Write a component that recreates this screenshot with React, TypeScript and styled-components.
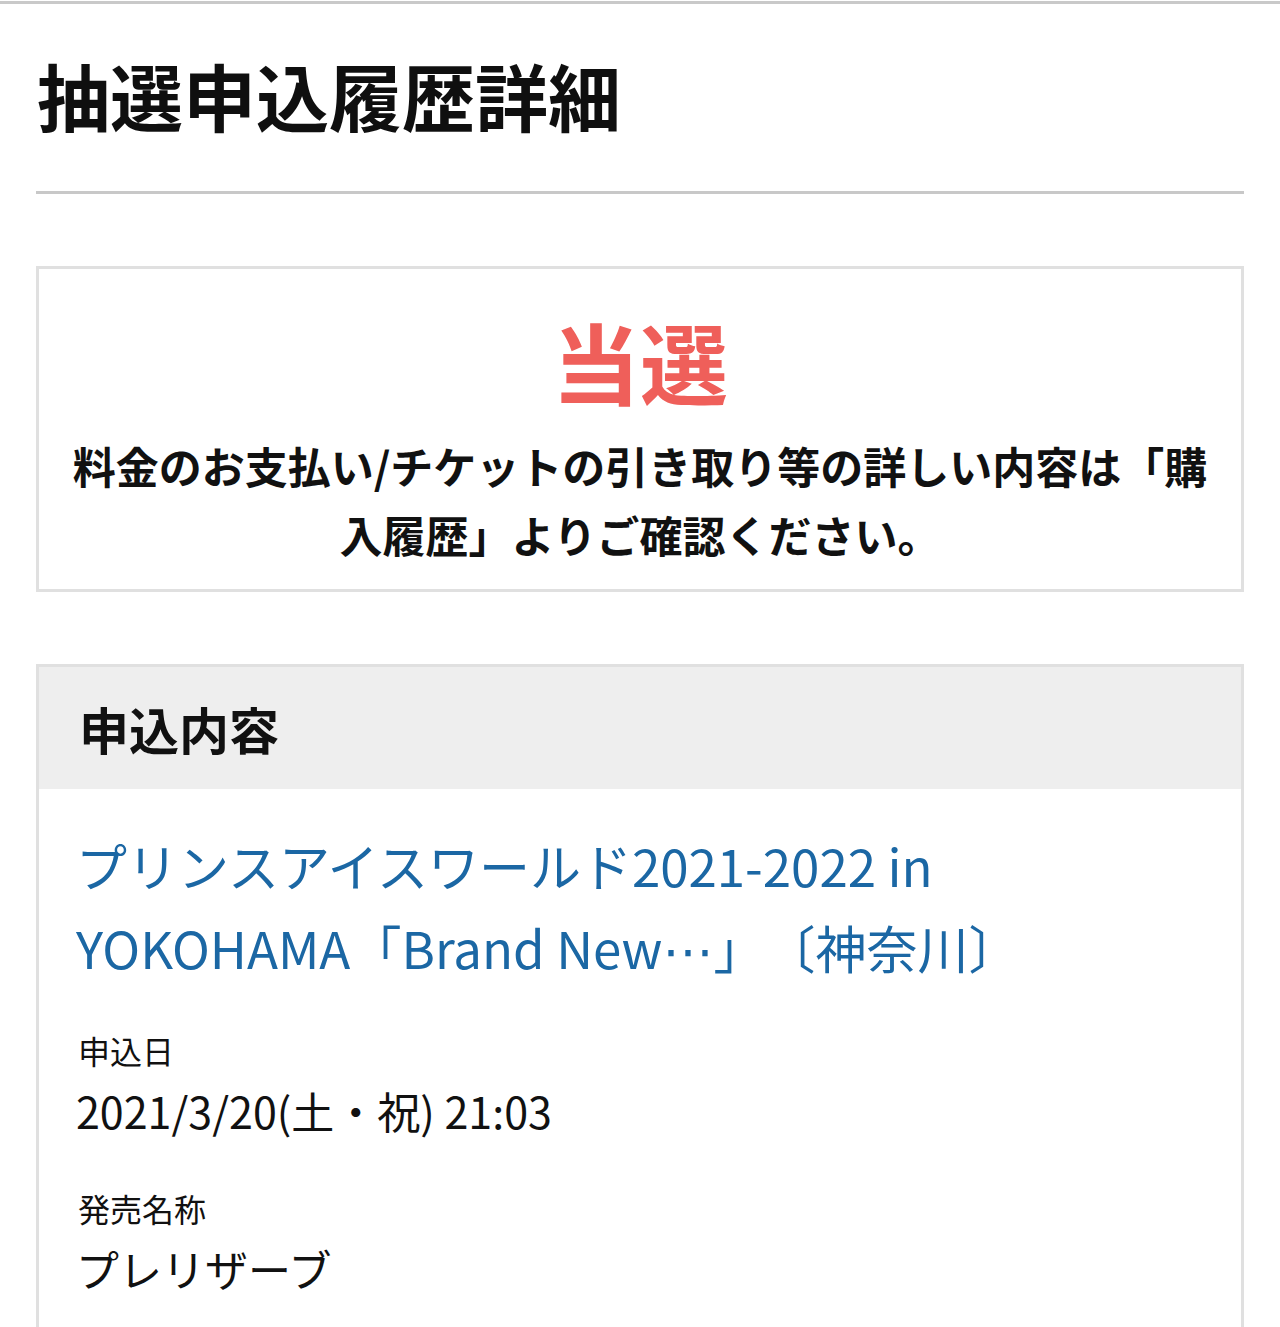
import React from "react";
import styled, { createGlobalStyle } from "styled-components";

const GlobalStyle = createGlobalStyle`
  html, body {
    margin: 0;
    padding: 0;
    background: #ffffff;
  }
  body {
    font-family: "Noto Sans CJK JP", "Noto Sans", sans-serif;
    color: #111111;
    text-spacing-trim: space-all;
  }
`;

const Page = styled.div`
  margin-top: 1px;
  border-top: 3px solid #c9c9c9;
  padding: 0 36px 0 36px;
  min-height: 1323px;
  box-sizing: border-box;
  overflow: hidden;
`;

const Title = styled.h1`
  margin: 46px 0 0 0;
  padding-left: 1px;
  font-size: 73px;
  line-height: 88px;
  font-weight: 700;
  color: #0f0f0f;
  letter-spacing: 0;
`;

const Divider = styled.hr`
  margin: 53px 0 0 0;
  border: none;
  height: 3px;
  background: #c8c8c8;
`;

const Box = styled.section<{ $gap: number }>`
  margin-top: ${(p) => p.$gap}px;
  border: 3px solid #e0e0e0;
  background: #ffffff;
`;

const ResultBox = styled(Box)`
  padding: 38px 30px 20px;
  text-align: center;
`;

const ResultLabel = styled.div`
  font-size: 88px;
  line-height: 105px;
  font-weight: 700;
  color: #ef5f5a;
`;

const Notice = styled.p`
  margin: 19px 0 0 0;
  font-size: 43px;
  line-height: 69px;
  font-weight: 700;
  color: #111111;
`;

const SectionHeader = styled.div`
  background: #eeeeee;
  height: 122px;
  display: flex;
  align-items: center;
  padding: 0 40px;
`;

const SectionTitle = styled.h2`
  margin: 0;
  font-size: 50px;
  line-height: 60px;
  font-weight: 700;
  color: #111111;
`;

const SectionBody = styled.div`
  padding: 35px 40px 60px 37px;
  display: flex;
  flex-direction: column;
`;

const EventLink = styled.a`
  display: block;
  font-size: 51px;
  line-height: 82px;
  font-weight: 400;
  color: #1b67a4;
  text-decoration: none;
  text-spacing-trim: space-all;
`;

const Ellipsis = styled.span`
  display: inline-block;
  width: 1em;
  text-align: center;
  font-family: "DejaVu Sans", sans-serif;
  line-height: 1;
`;

const Field = styled.div<{ $gap: number }>`
  margin-top: ${(p) => p.$gap}px;
  display: flex;
  flex-direction: column;
  gap: 4px;
`;

const FieldLabel = styled.div`
  font-size: 32px;
  line-height: 48px;
  padding-left: 2px;
  color: #111111;
`;

const FieldValue = styled.div`
  font-size: 43px;
  line-height: 64px;
  color: #111111;
`;

export default function App() {
  return (
    <>
      <GlobalStyle />
      <Page>
        <Title>抽選申込履歴詳細</Title>
        <Divider />
        <ResultBox $gap={72}>
          <ResultLabel>当選</ResultLabel>
          <Notice>
            料金のお支払い/チケットの引き取り等の詳しい内容は「購入履歴」よりご確認ください。
          </Notice>
        </ResultBox>
        <Box $gap={72}>
          <SectionHeader>
            <SectionTitle>申込内容</SectionTitle>
          </SectionHeader>
          <SectionBody>
            <EventLink href="#">
              プリンスアイスワールド2021-2022 in
              <br />
              YOKOHAMA「Brand New<Ellipsis>⋯</Ellipsis>」〔神奈川〕
            </EventLink>
            <Field $gap={38}>
              <FieldLabel>申込日</FieldLabel>
              <FieldValue>2021/3/20(土・祝) 21:03</FieldValue>
            </Field>
            <Field $gap={42}>
              <FieldLabel>発売名称</FieldLabel>
              <FieldValue>プレリザーブ</FieldValue>
            </Field>
          </SectionBody>
        </Box>
      </Page>
    </>
  );
}
